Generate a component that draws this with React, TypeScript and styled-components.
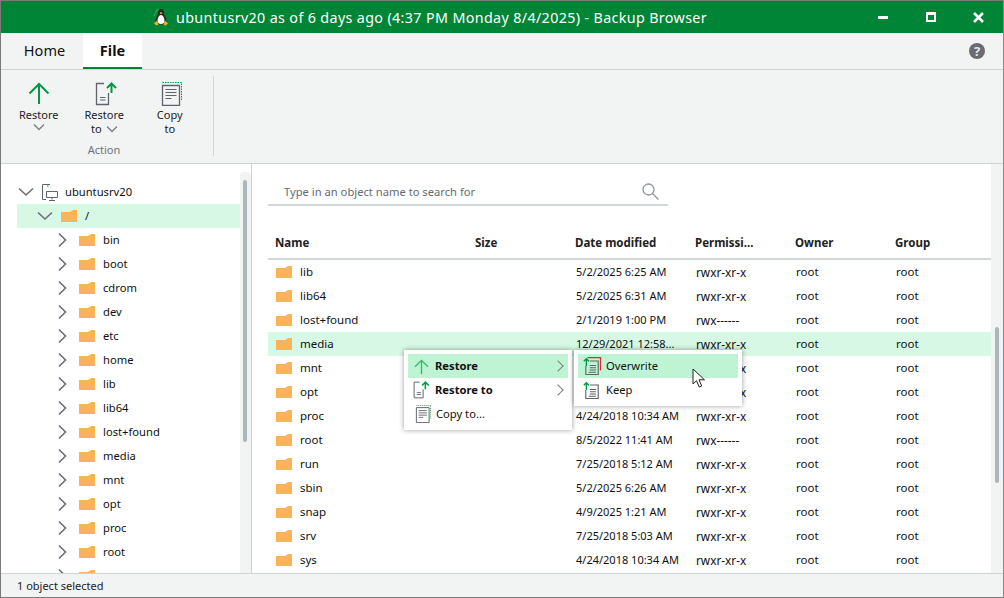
import styled, { createGlobalStyle } from 'styled-components'

const FONT = `"Noto Sans", "Open Sans", Arial, sans-serif`

const TREE = ['bin', 'boot', 'cdrom', 'dev', 'etc', 'home', 'lib', 'lib64', 'lost+found', 'media', 'mnt', 'opt', 'proc', 'root', 'run']

const FILES = [
  ['lib', '5/2/2025 6:25 AM', 'rwxr-xr-x'],
  ['lib64', '5/2/2025 6:31 AM', 'rwxr-xr-x'],
  ['lost+found', '2/1/2019 1:00 PM', 'rwx------'],
  ['media', '12/29/2021 12:58...', 'rwxr-xr-x'],
  ['mnt', '4/24/2018 10:34 AM', 'rwxr-xr-x'],
  ['opt', '4/24/2018 10:34 AM', 'rwxr-xr-x'],
  ['proc', '4/24/2018 10:34 AM', 'rwxr-xr-x'],
  ['root', '8/5/2022 11:41 AM', 'rwx------'],
  ['run', '7/25/2018 5:12 AM', 'rwxr-xr-x'],
  ['sbin', '5/2/2025 6:26 AM', 'rwxr-xr-x'],
  ['snap', '4/9/2025 1:21 AM', 'rwxr-xr-x'],
  ['srv', '7/25/2018 5:03 AM', 'rwxr-xr-x'],
  ['sys', '4/24/2018 10:34 AM', 'rwxr-xr-x'],
]

function Folder() {
  return (
    <svg width='16' height='12' viewBox='0 0 16 12'>
      <path d='M0 2h9l3-2h4v12H0z' fill='#f9b35b' />
    </svg>
  )
}

function Chevron({ open }: { open?: boolean }) {
  return (
    <svg width='16' height='16' viewBox='0 0 16 16' fill='none' stroke='#6a7078' strokeWidth='1.6'>
      {open ? <path d='M1 4.500 8 11l7-6.500' /> : <path d='M4 1.500 10.500 8 4 14.500' />}
    </svg>
  )
}

function SmallChevron() {
  return (
    <svg width='12' height='8' viewBox='0 0 12 8' fill='none' stroke='#7b8086' strokeWidth='1.4'>
      <path d='M1 1.500 6 6.500l5-5' />
    </svg>
  )
}

function ArrowUp({ size, color = '#009a44' }: { size: number; color?: string }) {
  return (
    <svg width={size} height={size} viewBox='0 0 22 22' fill='none' stroke={color} strokeWidth='2'>
      <path d='M11 22V2M1.500 11.500 11 2l9.500 9.500' />
    </svg>
  )
}

function RestoreToIcon({ small }: { small?: boolean }) {
  const size = small ? 18 : 24
  return (
    <svg width={size} height={size} viewBox='0 0 24 24' fill='none'>
      <path d='M9 1.500H1.500v21h12V11' stroke='#5f646b' strokeWidth='1.300' />
      <path d='M5 15.500h5.500M5 18h5.500' stroke='#5f646b' strokeWidth='1.200' />
      <path d='M16.500 11V2M12 6l4.500-4.500L21 6' stroke='#009a44' strokeWidth='2' />
    </svg>
  )
}

function CopyToIcon({ small }: { small?: boolean }) {
  const size = small ? 18 : 24
  return (
    <svg width={size} height={size} viewBox='0 0 24 24' fill='none'>
      <path d='M4.500 .5h19V19' stroke='#009a44' strokeWidth='1' strokeDasharray='1.500 1' />
      <path d='M4.500 3.500h17v20h-17z' stroke='#5f646b' strokeWidth='1.300' />
      <path d='M7.500 7.500h11M7.500 10.500h11M7.500 13.500h11M7.500 16.500h6' stroke='#5f646b' strokeWidth='1.200' />
    </svg>
  )
}

function OverwriteIcon({ red }: { red?: boolean }) {
  return (
    <svg width='18' height='18' viewBox='0 0 16 16' fill='none'>
      {red && <path d='M4 .5h11.500V12' stroke='#e8262a' strokeWidth='1' />}
      <path d='M6 3.500h7.500v12h-11V8' stroke='#5f646b' strokeWidth='1' />
      <path d='M6 7.500h5.500M6 9.500h5.500M6 11.500h5.500M5 13.500h6.500' stroke='#5f646b' strokeWidth='1' />
      <path d='M3 8V1.500M.7 3.800 3 1.500l2.300 2.300' stroke='#009a44' strokeWidth='1.200' />
    </svg>
  )
}

function Penguin() {
  return (
    <svg width='16' height='17' viewBox='0 0 16 17'>
      <path d='M1 7 4 1h3' fill='none' stroke='#3fae4f' strokeWidth='1' />
      <path d='M8 0c2.500 0 3 2.500 3 4.500 0 2 2.500 4 2.500 7.500 0 2-2 3.500-5.500 3.500S2.500 14 2.500 12C2.500 8.500 5 6.500 5 4.500 5 2.500 5.500 0 8 0z' fill='#23262b' />
      <path d='M8 6c2 0 3.500 3 3.500 6 0 2-1.500 3-3.500 3s-3.500-1-3.500-3c0-3 1.500-6 3.500-6z' fill='#fff' />
      <path d='M6.500 4 8 3l1.500 1L8 5.200z' fill='#f2b01e' />
      <path d='M1 14.500 4 11.500l1.500 4-2 1zM15 14.500l-3-3-1.500 4 2 1z' fill='#f2b01e' />
    </svg>
  )
}

function Computer() {
  return (
    <svg width='17' height='17' viewBox='0 0 17 17' fill='none' stroke='#5f646b' strokeWidth='1'>
      <path d='M9 .5H1.500v15H5' />
      <path d='M5.500 7.500h11v6h-11zM11 13.500v2M8 16.500h6' />
      <path d='M6 2h1.500' stroke='#009a44' />
    </svg>
  )
}

function Magnifier() {
  return (
    <svg width='17' height='17' viewBox='0 0 17 17' fill='none' stroke='#8f9499' strokeWidth='1.300'>
      <circle cx='6.500' cy='6.500' r='5.500' />
      <path d='m10.500 10.500 6 6' />
    </svg>
  )
}

function Cursor() {
  return (
    <svg width='14' height='20' viewBox='0 0 14 20'>
      <path d='M1 1v15l3.500-3.300 2.700 6.300 2.500-1-2.700-6.200H12.500z' fill='#fff' stroke='#222' strokeWidth='1' />
    </svg>
  )
}

export default function App() {
  return (
    <Window>
      <GlobalStyle />
      <TitleBar>
        <TitleSpacer />
        <TitleText>
          <Penguin />
          ubuntusrv20 as of 6 days ago (4:37 PM Monday 8/4/2025) - Backup Browser
        </TitleText>
        <WindowControls>
          <Minimize />
          <Maximize />
          <svg width='11' height='11' viewBox='0 0 11 11' stroke='#fff' strokeWidth='2.600'>
            <path d='m1 1 9 9M10 1l-9 9' />
          </svg>
        </WindowControls>
      </TitleBar>

      <TabRow>
        <Tab>Home</Tab>
        <Tab active>File</Tab>
        <Help>?</Help>
      </TabRow>

      <Ribbon>
        <RibbonGroup>
          <RibbonButtons>
            <RibbonButton>
              <IconSlot><ArrowUp size={22} /></IconSlot>
              <span>Restore</span>
              <SmallChevron />
            </RibbonButton>
            <RibbonButton>
              <IconSlot shift={3}><RestoreToIcon /></IconSlot>
              <span>Restore</span>
              <ButtonLine>to <SmallChevron /></ButtonLine>
            </RibbonButton>
            <RibbonButton>
              <IconSlot><CopyToIcon /></IconSlot>
              <span>Copy</span>
              <span>to</span>
            </RibbonButton>
          </RibbonButtons>
          <GroupLabel>Action</GroupLabel>
        </RibbonGroup>
      </Ribbon>

      <Main>
        <TreePane>
          <TreeList>
            <TreeRow level={0}>
              <Chevron open />
              <Computer />
              <TreeLabel>ubuntusrv20</TreeLabel>
            </TreeRow>
            <TreeRow level={1} selected>
              <Chevron open />
              <Folder />
              <TreeLabel>/</TreeLabel>
            </TreeRow>
            {TREE.map((name) => (
              <TreeRow level={2} key={name}>
                <Chevron />
                <Folder />
                <TreeLabel>{name}</TreeLabel>
              </TreeRow>
            ))}
          </TreeList>
          <ScrollTrack>
            <TreeThumb />
          </ScrollTrack>
        </TreePane>

        <ListPane>
          <ListBody>
            <SearchBar>
              <SearchText>Type in an object name to search for</SearchText>
              <Magnifier />
            </SearchBar>
            <HeaderRow>
              <span>Name</span>
              <span>Size</span>
              <span>Date modified</span>
              <span>Permissi...</span>
              <span>Owner</span>
              <span>Group</span>
            </HeaderRow>
            {FILES.map(([name, date, perm]) => (
              <FileRow key={name} selected={name === 'media'}>
                <NameCell>
                  <Folder />
                  <RowLabel>{name}</RowLabel>
                </NameCell>
                <span />
                <DateCell>{date}</DateCell>
                <PermCell>{perm}</PermCell>
                <RowLabel>root</RowLabel>
                <RowLabel>root</RowLabel>
              </FileRow>
            ))}
          </ListBody>
          <ListScrollTrack>
            <ListThumb />
          </ListScrollTrack>

          <ContextMenu>
            <MenuItem active>
              <MenuIcon><ArrowUp size={15} color='#3db56d' /></MenuIcon>
              <MenuStrong>Restore</MenuStrong>
              <MenuArrow />
            </MenuItem>
            <MenuItem>
              <MenuIcon><RestoreToIcon small /></MenuIcon>
              <MenuStrong>Restore to</MenuStrong>
              <MenuArrow />
            </MenuItem>
            <MenuItem>
              <MenuIcon><CopyToIcon small /></MenuIcon>
              <MenuText>Copy to...</MenuText>
            </MenuItem>
          </ContextMenu>

          <SubMenu>
            <MenuItem active>
              <MenuIcon><OverwriteIcon red /></MenuIcon>
              <MenuText>Overwrite</MenuText>
            </MenuItem>
            <MenuItem>
              <MenuIcon><OverwriteIcon /></MenuIcon>
              <MenuText>Keep</MenuText>
            </MenuItem>
          </SubMenu>
          <CursorSpot>
            <Cursor />
          </CursorSpot>
        </ListPane>
      </Main>

      <StatusBar>1 object selected</StatusBar>
    </Window>
  )
}

const GlobalStyle = createGlobalStyle`
  * {
    box-sizing: border-box;
  }

  body {
    margin: 0;
    background: #fff;
    font-family: ${FONT};
    overflow: hidden;
  }
`

const Window = styled.div`
  width: 1004px;
  height: 598px;
  display: flex;
  flex-direction: column;
  border: 1px solid #7a7a7a;
  border-right-color: #8a8a8a;
  background: #f2f4f4;
  color: #111;
  font-size: 11.200px;
`

const TitleBar = styled.div`
  height: 32px;
  flex: none;
  display: flex;
  align-items: center;
  background: #008536;
  color: #fff;
`

const TitleSpacer = styled.div`
  width: 152px;
`

const TitleText = styled.div`
  display: flex;
  align-items: center;
  gap: 7px;
  font-size: 14.300px;
  letter-spacing: 0.36px;
  white-space: nowrap;
`

const WindowControls = styled.div`
  margin-left: auto;
  width: 125px;
  padding: 0 19px 0 0;
  display: flex;
  align-items: center;
  justify-content: space-between;
`

const Minimize = styled.div`
  width: 10px;
  height: 3px;
  background: #fff;
`

const Maximize = styled.div`
  width: 10px;
  height: 10px;
  border: 2px solid #fff;
  border-top-width: 3px;
  border-bottom-width: 2px;
`

const TabRow = styled.div`
  height: 37px;
  flex: none;
  display: flex;
  padding-left: 5px;
  border-bottom: 1px solid #cfd2d2;
`

const Tab = styled.div<{ active?: boolean }>`
  width: ${({ active }) => (active ? '59px' : '77px')};
  height: 36px;
  display: flex;
  align-items: center;
  justify-content: center;
  font-size: 14.500px;
  font-weight: ${({ active }) => (active ? 700 : 400)};
  background: ${({ active }) => (active ? '#fff' : 'transparent')};
  border-bottom: 2px solid ${({ active }) => (active ? '#008536' : 'transparent')};
`

const Help = styled.div`
  width: 16px;
  height: 16px;
  margin: 10px 18px 0 auto;
  border-radius: 50%;
  background: #6a6b70;
  color: #e8e8e8;
  font-size: 13px;
  font-weight: 700;
  line-height: 16px;
  text-align: center;
`

const Ribbon = styled.div`
  height: 94px;
  flex: none;
  padding: 6px 0 7px 5px;
  border-bottom: 1px solid #cfd2d2;
`

const RibbonGroup = styled.div`
  width: 208px;
  height: 80px;
  display: flex;
  flex-direction: column;
  border-right: 1px solid #d5d8d8;
`

const RibbonButtons = styled.div`
  display: flex;
`

const RibbonButton = styled.div`
  width: 65.500px;
  height: 66px;
  display: flex;
  flex-direction: column;
  align-items: center;
  font-size: 11px;
  line-height: 14px;
  color: #222;

  & > svg {
    margin-top: 1px;
  }
`

const IconSlot = styled.div<{ shift?: number }>`
  height: 30px;
  padding-top: 6px;
  flex: none;
  display: flex;
  justify-content: center;
  margin-bottom: 2px;
  transform: translateX(${({ shift }) => shift || 0}px);
`

const ButtonLine = styled.span`
  display: flex;
  align-items: center;
  gap: 4px;
`

const GroupLabel = styled.div`
  width: 196px;
  text-align: center;
  color: #6d7278;
  font-size: 11px;
`

const Main = styled.div`
  flex: 1;
  min-height: 0;
  display: flex;
  background: #fff;
`

const TreePane = styled.div`
  width: 251px;
  flex: none;
  display: flex;
  overflow: hidden;
  border-right: 1px solid #cfd2d2;
`

const TreeList = styled.div`
  width: 239px;
  flex: none;
  padding: 16px 0 0 16px;
  overflow: hidden;
`

const TreeRow = styled.div<{ level: number; selected?: boolean }>`
  height: 24px;
  display: flex;
  align-items: center;
  gap: ${({ level }) => (level === 0 ? '7px' : '8px')};
  padding-left: ${({ level }) => (level === 0 ? 1 : level === 1 ? 20 : 38)}px;
  background: ${({ selected }) => (selected ? '#d7f8e4' : 'transparent')};
`

const TreeLabel = styled.span`
  white-space: nowrap;
  margin-bottom: 2px;
`

const ScrollTrack = styled.div`
  flex: 1;
  margin-top: 8px;
  border-radius: 4px 4px 0 0;
  background: #f2f4f4;
`

const TreeThumb = styled.div`
  width: 4px;
  height: 262px;
  margin: 8px 0 0 3px;
  border-radius: 2px;
  background: #adb5b8;
`

const ListPane = styled.div`
  flex: 1;
  min-width: 0;
  position: relative;
  display: flex;
`

const ListBody = styled.div`
  flex: 1;
  min-width: 0;
  padding: 16px 0 0 16px;
  overflow: hidden;
`

const SearchBar = styled.div`
  width: 400px;
  height: 26px;
  display: flex;
  align-items: center;
  justify-content: space-between;
  padding: 0 9px 2px 16px;
  border-bottom: 2px solid #d2d8d6;
`

const SearchText = styled.span`
  color: #666b70;
  font-size: 11.200px;
`

const HeaderRow = styled.div`
  height: 30px;
  margin-top: 24px;
  display: grid;
  grid-template-columns: 200px 100px 120px 100px 100px 1fr;
  align-items: center;
  padding: 0 0 3px 7px;
  border-bottom: 2px solid #d2d8d6;
  font-weight: 700;
  font-size: 11.500px;
  color: #222;
`

const FileRow = styled.div<{ selected?: boolean }>`
  height: 24px;
  display: grid;
  grid-template-columns: 200px 100px 120px 100px 100px 1fr;
  align-items: center;
  padding-left: 8px;
  white-space: nowrap;
  background: ${({ selected }) => (selected ? '#d7f8e4' : 'transparent')};
`

const NameCell = styled.span`
  display: flex;
  align-items: center;
  gap: 8px;
`

const RowLabel = styled.span`
  font-size: 11.500px;
  margin-bottom: 1px;
`

const DateCell = styled.span`
  font-size: 11px;
  margin-bottom: 1px;
`

const PermCell = styled.span`
  font-size: 11.800px;
  margin-bottom: 1px;
`

const ListScrollTrack = styled.div`
  width: 12px;
  flex: none;
  background: #f2f4f4;
`

const ListThumb = styled.div`
  width: 4px;
  height: 156px;
  margin: 163px 0 0 4px;
  border-radius: 2px;
  background: #adb5b8;
`

const ContextMenu = styled.div`
  position: absolute;
  left: 152px;
  top: 186px;
  width: 168px;
  padding: 4px;
  background: #fff;
  box-shadow: 0 0 5px rgba(0, 0, 0, 0.4);
  z-index: 2;
`

const SubMenu = styled(ContextMenu)`
  left: 322px;
`

const MenuItem = styled.div<{ active?: boolean }>`
  height: 24px;
  display: flex;
  align-items: center;
  padding-right: 6px;
  font-size: 11.200px;
  background: ${({ active }) => (active ? '#bef4d3' : 'transparent')};
`

const MenuStrong = styled.span`
  font-weight: 700;
  margin-bottom: 2px;
`

const MenuText = styled.span`
  margin: 0 0 2px 1px;
`

const MenuIcon = styled.span`
  width: 27px;
  flex: none;
  display: flex;
  justify-content: center;
`

const MenuArrow = styled.span`
  width: 8px;
  height: 8px;
  margin-left: auto;
  border-top: 1.500px solid #7b8086;
  border-right: 1.500px solid #7b8086;
  transform: rotate(45deg);
`

const CursorSpot = styled.div`
  position: absolute;
  left: 440px;
  top: 204px;
  z-index: 3;
`

const StatusBar = styled.div`
  height: 24px;
  flex: none;
  display: flex;
  align-items: center;
  padding-left: 16px;
  border-top: 1px solid #cfd2d2;
  font-size: 11px;
  color: #222;
`
